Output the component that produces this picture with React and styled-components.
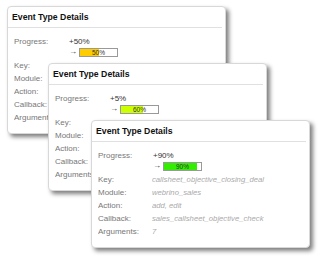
import React from "react";
import styled, { createGlobalStyle } from "styled-components";

const Global = createGlobalStyle`
  html, body { margin: 0; padding: 0; background: #fff; }
  body { font-family: "Liberation Sans", Arial, sans-serif; }
`;

const Desktop = styled.div`
  position: relative;
  width: 320px;
  height: 256px;
  overflow: hidden;
  background: #fff;
`;

const Card = styled.div`
  position: absolute;
  left: ${(p) => p.$x}px;
  top: ${(p) => p.$y}px;
  width: 219px;
  box-sizing: border-box;
  background: #fff;
  border: 1px solid #d8d8d8;
  border-radius: 4px;
  box-shadow: 3px 3px 4px rgba(0, 0, 0, 0.5);
  padding-bottom: 9px;
`;

const Title = styled.div`
  font-size: 8.7px;
  font-weight: bold;
  line-height: 13px;
  color: #111;
  padding: 4px 4px 3px;
`;

const Divider = styled.div`
  height: 1px;
  background: #e0e0e0;
  margin: 0 3px 0 0;
`;

const Grid = styled.div`
  display: grid;
  grid-template-columns: 54px 1fr;
  padding: 8px 0 0 6px;
  font-size: 8px;
  line-height: 13px;
`;

const Label = styled.div`
  color: #777;
  white-space: nowrap;
  overflow: hidden;
`;

const Value = styled.div`
  color: #aaa;
  font-style: italic;
  font-size: 7.7px;
  white-space: nowrap;
  overflow: hidden;
`;

const ProgressCell = styled.div`
  display: flex;
  flex-direction: column;
  padding-bottom: 2px;
`;

const Delta = styled.div`
  color: #333;
  line-height: 11px;
  padding-left: 1px;
`;

const BarLine = styled.div`
  display: flex;
  align-items: center;
  gap: 3px;
  height: 10px;
  padding-left: 1px;
`;

const Arrow = styled.span`
  font-size: 8px;
  color: #333;
  width: 7px;
  line-height: 10px;
`;

const Bar = styled.div`
  position: relative;
  width: 39px;
  height: 9px;
  box-sizing: border-box;
  border: 1px solid #999;
  background: #fff;
`;

const Fill = styled.div`
  height: 100%;
  background: ${(p) => p.$color};
`;

const BarText = styled.span`
  position: absolute;
  inset: 0;
  text-align: center;
  font-size: 6.5px;
  line-height: 7px;
  color: #333;
`;

const ProgressLabel = styled(Label)`
  line-height: 11px;
`;

function EventCard({ x, y, delta, pct, color, rows }) {
  return (
    <Card $x={x} $y={y}>
      <Title>Event Type Details</Title>
      <Divider />
      <Grid>
        <ProgressLabel>Progress:</ProgressLabel>
        <ProgressCell>
          <Delta>{delta}</Delta>
          <BarLine>
            <Arrow>→</Arrow>
            <Bar>
              <Fill $color={color} style={{ width: `${pct}%` }} />
              <BarText>{pct}%</BarText>
            </Bar>
          </BarLine>
        </ProgressCell>
        {rows.map(([k, v]) => (
          <React.Fragment key={k}>
            <Label>{k}</Label>
            <Value>{v}</Value>
          </React.Fragment>
        ))}
      </Grid>
    </Card>
  );
}

export default function App() {
  return (
    <>
      <Global />
      <Desktop>
        <EventCard
          x={7}
          y={6}
          delta="+50%"
          pct={50}
          color="#ffcc00"
          rows={[
            ["Key:", "callsheet_objective_presentation"],
            ["Module:", "webrino_sales"],
            ["Action:", "add, edit"],
            ["Callback:", "sales_callsheet_objective_check"],
            ["Arguments:", "5"],
          ]}
        />
        <EventCard
          x={48}
          y={63}
          delta="+5%"
          pct={60}
          color="#ccff00"
          rows={[
            ["Key:", "callsheet_objective_establish"],
            ["Module:", "webrino_sales"],
            ["Action:", "add, edit"],
            ["Callback:", "sales_callsheet_objective_check"],
            ["Arguments:", "6"],
          ]}
        />
        <EventCard
          x={91}
          y={120}
          delta="+90%"
          pct={90}
          color="#33ee00"
          rows={[
            ["Key:", "callsheet_objective_closing_deal"],
            ["Module:", "webrino_sales"],
            ["Action:", "add, edit"],
            ["Callback:", "sales_callsheet_objective_check"],
            ["Arguments:", "7"],
          ]}
        />
      </Desktop>
    </>
  );
}
